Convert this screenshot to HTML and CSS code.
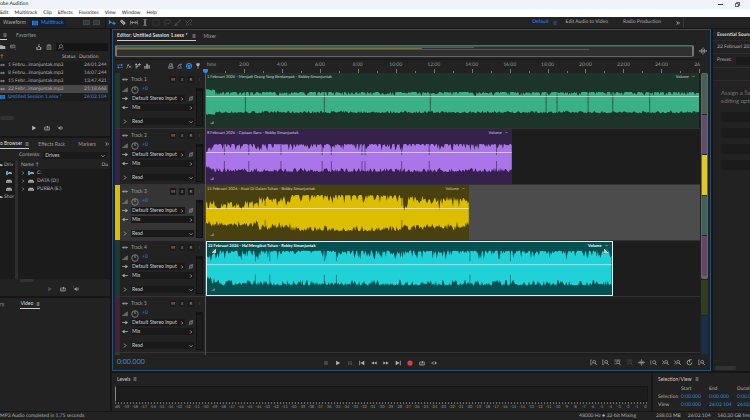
FILE: index.html
```html
<!DOCTYPE html>
<html lang="en">
<head>
    <meta charset="UTF-8">
    <meta name="viewport" content="width=device-width, initial-scale=1.0">
    <title>Adobe Audition</title>
    <link rel="stylesheet" href="styles.css">
</head>
<body>
    <svg class="sprite" aria-hidden="true">
        <symbol id="menu" viewBox="0 0 8 8"><path d="M1 1.5h6M1 4h6M1 6.5h6" fill="none" stroke="currentColor"/></symbol>
        <symbol id="right" viewBox="0 0 8 8"><path d="M2.5 1l3 3-3 3" fill="none" stroke="currentColor" stroke-width="1.3"/></symbol>
        <symbol id="down" viewBox="0 0 8 8"><path d="M1 2.5l3 3 3-3" fill="none" stroke="currentColor" stroke-width="1.3"/></symbol>
        <symbol id="more" viewBox="0 0 8 8"><path d="M1 1l3 3-3 3M4 1l3 3-3 3" fill="none" stroke="currentColor" stroke-width="1.5"/></symbol>
        <symbol id="wave" viewBox="0 0 16 10"><path d="M0 5h16M3 3v4M5 1v8M8 3v4M11 1v8M13 3v4" fill="none" stroke="currentColor" stroke-width="1.4"/></symbol>
        <symbol id="session" viewBox="0 0 16 12"><path d="M0 0h16v12H0z" fill="currentColor"/><path d="M2 3h12M2 6h12M2 9h12" stroke="#14283c" stroke-width="1.4"/></symbol>
        <symbol id="folder" viewBox="0 0 16 12"><path d="M0 1h6l2 2h6v8H0z" fill="currentColor"/></symbol>
        <symbol id="import" viewBox="0 0 16 16"><path d="M1 3h12v7H1zM3 6h6M13 14h2" fill="none" stroke="currentColor" stroke-width="1.5"/></symbol>
        <symbol id="insert" viewBox="0 0 16 16"><path d="M1 8h3v5h7V8h3v7H1zM7 0h2v5h2L8 9 5 5h2z" fill="currentColor"/></symbol>
        <symbol id="trash" viewBox="0 0 16 16"><path d="M3 5h10v10H3zM2 3h12M6 1h4M6 7v6M10 7v6" fill="none" stroke="currentColor" stroke-width="1.4"/></symbol>
        <symbol id="search" viewBox="0 0 16 16"><circle cx="8" cy="6" r="4.5" fill="none" stroke="currentColor" stroke-width="1.6"/><path d="M5 9l-4 5M12 14h3" stroke="currentColor" stroke-width="1.6"/></symbol>
        <symbol id="play" viewBox="0 0 16 16"><path d="M3 2l11 6-11 6z" fill="currentColor"/></symbol>
        <symbol id="stop" viewBox="0 0 16 16"><path d="M3 3h10v10H3z" fill="currentColor"/></symbol>
        <symbol id="pause" viewBox="0 0 16 16"><path d="M3 3h4v10H3zM9 3h4v10H9z" fill="currentColor"/></symbol>
        <symbol id="first" viewBox="0 0 16 16"><path d="M1 2h2v12H1zM14 2v12L4 8z" fill="currentColor"/></symbol>
        <symbol id="last" viewBox="0 0 16 16"><path d="M13 2h2v12h-2zM2 2v12l10-6z" fill="currentColor"/></symbol>
        <symbol id="rewind" viewBox="0 0 20 16"><path d="M10 3v10L1 8zM19 3v10l-9-5z" fill="currentColor"/></symbol>
        <symbol id="forward" viewBox="0 0 20 16"><path d="M1 3v10l9-5zM10 3v10l9-5z" fill="currentColor"/></symbol>
        <symbol id="record" viewBox="0 0 16 16"><circle cx="8" cy="8" r="7" fill="currentColor"/></symbol>
        <symbol id="loop" viewBox="0 0 18 16"><path d="M5 5H2v9h14V5h-3M5 11h8M5 5h6" fill="none" stroke="currentColor" stroke-width="2"/><path d="M9 1l5 4-5 4z" fill="currentColor"/></symbol>
        <symbol id="skip" viewBox="0 0 20 16"><path d="M0 8h6M13 8h3M8 3l-3 5 3 5M11 3v3M11 10v3" fill="none" stroke="currentColor" stroke-width="2"/><path d="M14 3l6 5-6 5z" fill="currentColor"/></symbol>
        <symbol id="speaker" viewBox="0 0 20 16"><path d="M4 6h3l5-5v14l-5-5H4z" fill="currentColor"/><path d="M14 4q3 4 0 8M16 2q5 6 0 12M0 3l3 3M1 1h3" fill="none" stroke="currentColor" stroke-width="1.5"/></symbol>
        <symbol id="drive" viewBox="0 0 18 12"><path d="M4 2h10l4 5v4H0V7z" fill="currentColor"/><path d="M2 8h14" stroke="#444"/></symbol>
        <symbol id="move" viewBox="0 0 20 18"><path d="M2 1l9 9-5 .5L2 15z" fill="currentColor"/><path d="M10 12h4v-6M15 9v6l4-4z" stroke="currentColor" fill="currentColor" stroke-width="1.5"/></symbol>
        <symbol id="razor" viewBox="0 0 18 18"><path d="M1 6l5-5 10 9-5 6z" fill="currentColor"/><path d="M5 6l6 5M15 16h3" stroke="#333" stroke-width="1.5"/></symbol>
        <symbol id="slip" viewBox="0 0 24 16"><path d="M2 2v12M22 2v12M5 8h14M9 4L5 8l4 4M15 4l4 4-4 4" fill="none" stroke="currentColor" stroke-width="2"/></symbol>
        <symbol id="ibeam" viewBox="0 0 16 18"><path d="M4 1q4 0 4 3v10q0 3-4 3M12 1q-4 0-4 3v10q0 3 4 3" fill="none" stroke="currentColor" stroke-width="1.8"/></symbol>
        <symbol id="marquee" viewBox="0 0 16 16"><path d="M1 2h14v12H1z" fill="none" stroke="currentColor" stroke-width="1.5" stroke-dasharray="3 1"/></symbol>
        <symbol id="lasso" viewBox="0 0 18 16"><path d="M3 10q-4-8 6-8t8 5-9 4-4 4" fill="none" stroke="currentColor" stroke-width="1.7"/></symbol>
        <symbol id="brush" viewBox="0 0 16 16"><path d="M15 1L7 9M6 9q-3 0-3 3l-2 3q5 0 6-4" fill="none" stroke="currentColor" stroke-width="2.3"/></symbol>
        <symbol id="heal" viewBox="0 0 18 16"><path d="M2 12L12 1l4 3L6 15zM1 4l4 3M10 11l5 3" fill="none" stroke="currentColor" stroke-width="2"/></symbol>
        <symbol id="swap" viewBox="0 0 18 16"><path d="M0 5h13M5 12h13" stroke="currentColor" stroke-width="2"/><path d="M12 1l6 4-6 4zM6 8l-6 4 6 4z" fill="currentColor"/></symbol>
        <symbol id="fx" viewBox="0 0 18 16"><path d="M1 15q3 0 4-6t5-7M3 6h6M9 7l7 7M16 7l-8 7" fill="none" stroke="currentColor" stroke-width="1.8"/></symbol>
        <symbol id="sends" viewBox="0 0 16 16"><path d="M3 15V3M3 10h5V4h4" fill="none" stroke="currentColor" stroke-width="2"/><path d="M0 5l3-5 3 5zM11 0l5 4-5 4z" fill="currentColor"/></symbol>
        <symbol id="bars" viewBox="0 0 16 16"><path d="M1 8h3v7H1zM6 2h4v13H6zM12 6h3v9h-3z" fill="currentColor"/></symbol>
        <symbol id="metronome" viewBox="0 0 16 16"><path d="M5 2h5l4 12H1zM3 10h9M7 9l5-7" fill="none" stroke="currentColor" stroke-width="1.6"/></symbol>
        <symbol id="global" viewBox="0 0 18 16"><path d="M1 14h14M2 11l5-8 5 8M9 3h6" fill="none" stroke="currentColor" stroke-width="1.8"/></symbol>
        <symbol id="magnet" viewBox="0 0 18 18"><circle cx="9" cy="9" r="9" fill="currentColor"/><path d="M5 15V8q0-4 4-4t4 4v7" fill="none" stroke="#17293b" stroke-width="2.5"/></symbol>
        <symbol id="pin" viewBox="0 0 16 18"><path d="M3 1h10v6l-4 3v7H7v-7L3 7z" fill="currentColor"/></symbol>
        <symbol id="level" viewBox="0 0 18 14"><path d="M0 13L17 1v12z" fill="#555"/><path d="M0 13h17V1M13 3v10M9 6v7" fill="none" stroke="currentColor" stroke-width="1.2"/></symbol>
        <symbol id="knob" viewBox="0 0 22 22"><circle cx="11" cy="11" r="9" fill="none" stroke="currentColor" stroke-width="2"/><path d="M11 3v8" stroke="currentColor" stroke-width="2.4"/></symbol>
        <symbol id="in" viewBox="0 0 16 10"><path d="M0 5h10" stroke="currentColor" stroke-width="2"/><path d="M9 0l7 5-7 5z" fill="currentColor"/></symbol>
        <symbol id="out" viewBox="0 0 16 10"><path d="M6 5h10" stroke="currentColor" stroke-width="2"/><path d="M7 0L0 5l7 5z" fill="currentColor"/></symbol>
        <symbol id="phase" viewBox="0 0 14 14"><circle cx="7" cy="7" r="4.5" fill="none" stroke="currentColor" stroke-width="1.6"/><path d="M1 14L13 0" stroke="currentColor" stroke-width="1.5"/></symbol>
        <symbol id="zoom-box" viewBox="0 0 20 18"><path d="M1 2h4M2 2v13M1 15h4M5 13l4-5" fill="none" stroke="currentColor" stroke-width="1.6"/><circle cx="12" cy="7" r="4" fill="none" stroke="currentColor" stroke-width="1.8"/><path d="M14 10l5 6" stroke="currentColor" stroke-width="2.3"/></symbol>
        <symbol id="zoom-span" viewBox="0 0 20 18"><path d="M1 2h18M3 5v3M3 11v4M6 15l3-5" fill="none" stroke="currentColor" stroke-width="1.6"/><circle cx="12" cy="8" r="4" fill="none" stroke="currentColor" stroke-width="1.8"/><path d="M14 11l5 6" stroke="currentColor" stroke-width="2.3"/></symbol>
        <symbol id="zoom-left" viewBox="0 0 20 18"><path d="M3 2q-3 7 0 14" fill="none" stroke="currentColor" stroke-width="1.6"/><circle cx="12" cy="8" r="4.5" fill="none" stroke="currentColor" stroke-width="1.8"/><path d="M14 11l5 6" stroke="currentColor" stroke-width="2.3"/></symbol>
        <symbol id="zoom-right" viewBox="0 0 20 18"><path d="M1 3l4 5-4 6M6 14l3-4" fill="none" stroke="currentColor" stroke-width="1.8"/><circle cx="12" cy="7" r="4" fill="none" stroke="currentColor" stroke-width="1.8"/><path d="M14 10l5 6" stroke="currentColor" stroke-width="2.3"/></symbol>
        <symbol id="zoom-all" viewBox="0 0 22 22"><path d="M11 1v20M1 11h20M7 5v12M15 5v12M4 8l-3 3 3 3M18 8l3 3-3 3" fill="none" stroke="currentColor" stroke-width="1.7"/></symbol>
        <symbol id="timer" viewBox="0 0 18 18"><path d="M9 3a6 6 0 1 0 6 6M9 9V2h6" fill="none" stroke="currentColor" stroke-width="2"/></symbol>
        <symbol id="min" viewBox="0 0 12 12"><path d="M0 6h12" stroke="currentColor" stroke-width="2"/></symbol>
        <symbol id="restore" viewBox="0 0 12 12"><path d="M1 4h7v7H1zM4 3V1h7v7H9" fill="none" stroke="currentColor" stroke-width="1.8"/></symbol>
    </svg>

    <header class="titlebar">
        <span>obe Audition</span>
        <button class="window-button" aria-label="Minimize"><svg><use href="#min"/></svg></button>
        <button class="window-button" aria-label="Restore"><svg><use href="#restore"/></svg></button>
    </header>
    <nav class="menubar">
        <a href="#">Edit</a><a href="#">Multitrack</a><a href="#">Clip</a><a href="#">Effects</a><a href="#">Favorites</a><a href="#">View</a><a href="#">Window</a><a href="#">Help</a>
    </nav>
    <div class="toolbar">
        <div class="modes">
            <button>Waveform</button>
            <button class="mode-active"><svg><use href="#session"/></svg>Multitrack</button>
        </div>
        <div class="views dim">
            <button aria-label="Spectral frequency"><svg><use href="#session"/></svg></button>
            <button aria-label="Spectral pitch"><svg><use href="#session"/></svg></button>
        </div>
        <div class="tools">
            <button class="blue" aria-label="Move"><svg><use href="#move"/></svg></button>
            <button aria-label="Razor"><svg><use href="#razor"/></svg></button>
            <button aria-label="Slip"><svg><use href="#slip"/></svg></button>
            <button aria-label="Time selection"><svg><use href="#ibeam"/></svg></button>
            <button class="dim" aria-label="Marquee"><svg><use href="#marquee"/></svg></button>
            <button class="dim" aria-label="Lasso"><svg><use href="#lasso"/></svg></button>
            <button class="dim" aria-label="Brush"><svg><use href="#brush"/></svg></button>
            <button class="dim" aria-label="Healing brush"><svg><use href="#heal"/></svg></button>
        </div>
        <div class="workspaces">
            <a href="#" class="blue">Default <svg><use href="#menu"/></svg></a>
            <a href="#">Edit Audio to Video</a>
            <a href="#">Radio Production</a>
            <button aria-label="More workspaces"><svg><use href="#more"/></svg></button>
        </div>
    </div>

    <main class="workspace">
        <aside class="sidebar">
            <section class="panel files">
                <div class="tabs">
                    <button class="tab tab-clip tab-active" aria-label="Files"><svg><use href="#menu"/></svg></button>
                    <button class="tab">Favorites</button>
                </div>
                <div class="file-tools">
                    <button aria-label="Open"><svg><use href="#folder"/></svg></button>
                    <button aria-label="Import"><svg><use href="#import"/></svg></button>
                    <button class="push" aria-label="Insert"><svg><use href="#insert"/></svg></button>
                    <button aria-label="Delete"><svg><use href="#trash"/></svg></button>
                    <label class="search"><svg><use href="#search"/></svg><input type="text" aria-label="Search files"></label>
                </div>
                <table class="file-table">
                    <thead><tr><th>↑</th><th></th><th>Status</th><th>Duration</th></tr></thead>
                    <tbody>
                        <tr><td><svg><use href="#wave"/></svg></td><td colspan="2">1 Febru...imanjuntak.mp3</td><td>26:01.244</td></tr>
                        <tr><td><svg><use href="#wave"/></svg></td><td colspan="2">8 Febru...imanjuntak.mp3</td><td>16:07.244</td></tr>
                        <tr><td><svg><use href="#wave"/></svg></td><td colspan="2">15 Febr...imanjuntak.mp3</td><td>13:47.421</td></tr>
                        <tr class="selected"><td><svg><use href="#wave"/></svg></td><td colspan="2">22 Febr...imanjuntak.mp3</td><td>21:18.668</td></tr>
                        <tr class="blue"><td><svg><use href="#session"/></svg></td><td colspan="2">Untitled Session 1.sesx *</td><td>26:02.104</td></tr>
                    </tbody>
                </table>
                <div class="scroll-x"></div>
                <div class="preview">
                    <button aria-label="Play"><svg><use href="#play"/></svg></button>
                    <button aria-label="Loop"><svg><use href="#loop"/></svg></button>
                    <button aria-label="Auto-play"><svg><use href="#speaker"/></svg></button>
                </div>
            </section>

            <section class="panel browser">
                <div class="tabs">
                    <button class="tab tab-clip tab-active">o Browser <svg><use href="#menu"/></svg></button>
                    <button class="tab">Effects Rack</button>
                    <button class="tab">Markers</button>
                    <button class="tab tab-more" aria-label="More panels"><svg><use href="#more"/></svg></button>
                </div>
                <label class="contents">Contents:
                    <span class="field"><select><option>Drives</option></select><svg><use href="#down"/></svg></span>
                </label>
                <div class="browser-body">
                    <ul class="places">
                        <li><svg class="cut"><use href="#folder"/></svg>Driv</li>
                        <li class="place"><svg class="c-drive"><use href="#drive"/></svg></li>
                        <li class="place"><svg><use href="#drive"/></svg></li>
                        <li class="place"><svg><use href="#drive"/></svg></li>
                        <li><svg class="cut"><use href="#folder"/></svg>Shor</li>
                    </ul>
                    <div class="splitter"></div>
                    <ul class="drives">
                        <li class="drives-head"><span>Name ↑</span><span>Du</span></li>
                        <li><svg class="arrow"><use href="#right"/></svg><svg class="c-drive"><use href="#drive"/></svg>C:</li>
                        <li><svg class="arrow"><use href="#right"/></svg><svg><use href="#drive"/></svg>DATA (D:)</li>
                        <li><svg class="arrow"><use href="#right"/></svg><svg><use href="#drive"/></svg>PURBA (E:)</li>
                    </ul>
                </div>
                <div class="scroll-x scroll-inner"></div>
                <div class="preview preview-browser">
                    <button class="dim" aria-label="Play"><svg><use href="#play"/></svg></button>
                    <button aria-label="Loop"><svg><use href="#loop"/></svg></button>
                    <button aria-label="Auto-play"><svg><use href="#speaker"/></svg></button>
                </div>
            </section>

            <section class="panel video">
                <div class="tabs">
                    <button class="tab tab-clip">ry</button>
                    <button class="tab tab-active">Video <svg><use href="#menu"/></svg></button>
                </div>
            </section>
        </aside>

        <section class="panel editor">
            <div class="tabs">
                <button class="tab tab-active">Editor: Untitled Session 1.sesx * <svg><use href="#menu"/></svg></button>
                <button class="tab">Mixer</button>
            </div>
            <div class="overview-row">
                <div class="overview"><div class="overview-lines"><i></i><i></i><i></i><i></i></div></div>
                <button aria-label="Zoom out full"><svg><use href="#zoom-all"/></svg></button>
            </div>
            <div class="ruler-row">
                <div class="track-tools">
                    <button class="blue" aria-label="Inputs and outputs"><svg><use href="#swap"/></svg></button>
                    <button aria-label="Effects"><svg><use href="#fx"/></svg></button>
                    <button aria-label="Sends"><svg><use href="#sends"/></svg></button>
                    <button aria-label="EQ"><svg><use href="#bars"/></svg></button>
                    <button class="push" aria-label="Metronome"><svg><use href="#metronome"/></svg></button>
                    <button aria-label="Global clip stretching"><svg><use href="#global"/></svg></button>
                    <button class="blue" aria-label="Snap"><svg><use href="#magnet"/></svg></button>
                    <button aria-label="Marker"><svg><use href="#pin"/></svg></button>
                </div>
                <div class="ruler" id="ruler"></div>
            </div>
            <div class="tracks-area">
                <div class="tracks" id="tracks"></div>
                <div class="minimap">
                    <div class="minimap-view"><i class="m-green"></i><i class="m-purple"></i><i class="m-yellow"></i><i class="m-teal"></i><i class="m-plum"></i></div>
                    <i class="m-olive"></i><i class="m-blue"></i>
                </div>
            </div>
            <div class="transport">
                <output class="timecode">0:00.000</output>
                <div class="transport-buttons">
                    <button class="dim" aria-label="Stop"><svg><use href="#stop"/></svg></button>
                    <button aria-label="Play"><svg><use href="#play"/></svg></button>
                    <button class="dim" aria-label="Pause"><svg><use href="#pause"/></svg></button>
                    <button aria-label="Go to start"><svg><use href="#first"/></svg></button>
                    <button aria-label="Rewind"><svg><use href="#rewind"/></svg></button>
                    <button aria-label="Fast forward"><svg><use href="#forward"/></svg></button>
                    <button aria-label="Go to end"><svg><use href="#last"/></svg></button>
                    <button class="red" aria-label="Record"><svg><use href="#record"/></svg></button>
                    <button aria-label="Loop"><svg><use href="#loop"/></svg></button>
                    <button aria-label="Skip selection"><svg><use href="#skip"/></svg></button>
                </div>
                <div class="zoom-buttons">
                    <button aria-label="Zoom in amplitude"><svg><use href="#zoom-box"/></svg></button>
                    <button aria-label="Zoom out amplitude"><svg><use href="#zoom-box"/></svg></button>
                    <button aria-label="Zoom in time"><svg><use href="#zoom-span"/></svg></button>
                    <button class="dim" aria-label="Zoom out time"><svg><use href="#zoom-span"/></svg></button>
                    <button aria-label="Zoom out full"><svg><use href="#zoom-all"/></svg></button>
                    <button aria-label="Zoom at in point"><svg><use href="#zoom-left"/></svg></button>
                    <button aria-label="Zoom at out point"><svg><use href="#zoom-right"/></svg></button>
                    <button aria-label="Zoom to selection"><svg><use href="#zoom-right"/></svg></button>
                    <button aria-label="Timed zoom"><svg><use href="#timer"/></svg></button>
                    <button aria-label="Zoom selected track"><svg><use href="#zoom-box"/></svg></button>
                </div>
            </div>
        </section>

        <aside class="panel sound">
            <h2>Essential Sound</h2>
            <p class="sound-clip">22 Februari 202</p>
            <label class="preset">Preset: <select><option></option></select></label>
            <div class="sound-row"></div>
            <p class="hint">Assign a Ta<br>editing opti</p>
            <div class="types">
                <button aria-label="Dialogue"></button>
                <button aria-label="Music"></button>
                <button aria-label="SFX"></button>
                <button aria-label="Ambience"></button>
            </div>
            <div class="scroll-x"></div>
        </aside>

        <section class="panel levels">
            <div class="tabs"><button class="tab">Levels <svg><use href="#menu"/></svg></button></div>
            <div class="meter"></div>
            <div class="ticks"></div>
            <div class="scale" id="scale"></div>
        </section>

        <section class="panel selection">
            <div class="tabs"><button class="tab">Selection/View <svg><use href="#menu"/></svg></button></div>
            <table>
                <tr><td></td><th>Start</th><th>End</th><th>Duratio</th></tr>
                <tr><th>Selection</th><td>0:00.000</td><td>0:00.000</td><td>0:00.0</td></tr>
                <tr><th>View</th><td>0:00.000</td><td>26:02.104</td><td>26:02.</td></tr>
            </table>
        </section>
    </main>

    <footer class="status">
        <span>MP3 Audio completed in 1,75 seconds</span>
        <span class="push">48000 Hz ● 32-bit Mixing</span>
        <div class="status-side"><span>288,03 MB</span><span>26:02.104</span><span>560,30 GB free</span></div>
    </footer>

    <script src="script.js"></script>
</body>
</html>
```
FILE: styles.css
```css
* {
    box-sizing: border-box;
}
body {
    margin: 0;
    height: 100vh;
    display: flex;
    flex-direction: column;
    overflow: hidden;
    background-color: #161616;
    color: #b0b0b0;
    font-family: Lato, "Liberation Sans", sans-serif;
    font-size: 5px;
    line-height: 7px;
    white-space: nowrap;
    text-rendering: geometricPrecision;
}
button, input, select {
    font: inherit;
    color: inherit;
    background: none;
    border: none;
    margin: 0;
    padding: 0;
    min-width: 0;
}
button {
    display: flex;
    align-items: center;
    gap: 3px;
    cursor: pointer;
}
select {
    appearance: none;
    flex: 1;
}
a {
    color: inherit;
    text-decoration: none;
}
svg {
    display: block;
    width: 6px;
    height: 6px;
    flex: none;
}
ul, p, h2 {
    margin: 0;
    padding: 0;
    list-style: none;
    font-size: inherit;
}
table {
    border-collapse: collapse;
}
th, td {
    padding: 0;
    text-align: left;
    font-weight: normal;
}
.sprite {
    display: none;
}
.blue {
    color: #2d8ceb;
}
.red {
    color: #e23c3c;
}
.dim {
    color: #4a4a4a;
}
.push {
    margin-left: auto;
}

/* window */
.titlebar {
    display: flex;
    align-items: center;
    height: 9px;
    gap: 12px;
    padding-right: 10px;
    background-color: #eef4f9;
    color: #222;
}
.titlebar span {
    flex: 1;
}
.window-button svg {
    width: 5px;
    height: 5px;
}
.menubar {
    display: flex;
    align-items: center;
    gap: 6px;
    height: 8px;
    background-color: #fff;
    color: #222;
}
.toolbar {
    display: flex;
    align-items: center;
    height: 12px;
    background-color: #232323;
    border-bottom: 1px solid #161616;
}
.toolbar > div {
    display: flex;
    align-items: center;
    height: 100%;
}
.modes {
    gap: 4px;
    padding-left: 3px;
}
.mode-active {
    height: 9px;
    padding: 0 2px;
    background-color: #12202f;
    color: #2d8ceb;
}
.views {
    gap: 3px;
    padding: 0 5px 0 17px;
    border-right: 1px solid #161616;
}
.views svg {
    width: 7px;
    height: 5px;
}
.tools {
    gap: 4px;
    padding-left: 3px;
}
.tools button {
    width: 7px;
    justify-content: center;
}
.tools svg {
    width: 8px;
    height: 7px;
}
.workspaces {
    gap: 15px;
    margin-left: auto;
    margin-right: 66px;
    padding-right: 3px;
    border-right: 1px solid #3a3a3a;
}
.workspaces a {
    display: flex;
    align-items: center;
    gap: 4px;
}
.workspaces svg {
    width: 4px;
    height: 4px;
}
.workspaces a.blue {
    margin-right: -6px;
}

/* panels */
.workspace {
    flex: 1;
    min-height: 0;
    display: grid;
    grid-template-columns: 110px 1fr 58px 37px;
    grid-template-rows: 1fr 38px;
    gap: 2px;
}
.panel {
    background-color: #222;
    min-width: 0;
    overflow: hidden;
}
.sidebar {
    grid-row: 1 / 3;
    display: grid;
    grid-template-rows: 107px 158px 1fr;
    gap: 2px;
}
.files, .browser, .editor, .sound {
    display: flex;
    flex-direction: column;
}
.tabs {
    display: flex;
    gap: 8px;
    height: 12px;
    padding: 1px 4px 0;
    flex: none;
}
.tab {
    height: 10px;
    color: #999;
}
.tab svg {
    width: 4px;
    height: 4px;
}
.tab-active {
    color: #ddd;
    border-bottom: 1px solid #ccc;
}
.tab-clip {
    margin-left: -4px;
}

/* files */
.files .tab-clip {
    width: 7px;
    justify-content: flex-end;
}
.file-tools {
    display: flex;
    align-items: center;
    gap: 4px;
    height: 12px;
    padding-right: 2px;
}
.search {
    display: flex;
    align-items: center;
    width: 52px;
    height: 8px;
    padding: 0 2px;
    background-color: #151515;
}
.search input {
    flex: 1;
}
.file-table {
    width: 108px;
    background-color: #1c1c1c;
    table-layout: fixed;
}
.files .tabs {
    gap: 9px;
}
.file-table th {
    height: 8px;
    line-height: 8px;
    background-color: #222;
}
.file-table th:first-child {
    width: 8px;
}
.file-table th:nth-child(3) {
    width: 17px;
}
.file-table th:nth-child(4) {
    width: 29px;
}
.file-table td {
    height: 8px;
    line-height: 7px;
}
.file-table td:last-child {
    padding-left: 5px;
}
.file-table svg {
    width: 5px;
    height: 4px;
}
.selected {
    background-color: #484848;
}
.files .scroll-x {
    margin-top: auto;
}
.scroll-x {
    width: 14px;
    height: 4px;
    border-radius: 2px;
    background-color: #333;
    flex: none;
}
.preview {
    display: flex;
    align-items: center;
    justify-content: center;
    gap: 7px;
    height: 16px;
    padding-right: 16px;
    background-color: #222;
    flex: none;
}

/* browser */
.browser .tab-more {
    margin-left: auto;
}
.browser .tab-clip {
    margin-right: 2px;
}
.browser .tabs {
    gap: 7px;
    padding-right: 1px;
}
.browser .tab:nth-child(3) {
    margin-left: 6px;
}
.contents {
    display: flex;
    align-items: center;
    gap: 3px;
    height: 11px;
    padding: 0 3px 0 19px;
}
.field {
    display: flex;
    align-items: center;
    flex: 1;
    height: 7px;
    padding: 0 2px;
    background-color: #1a1a1a;
    color: #ccc;
}
.field svg {
    width: 4px;
    height: 4px;
}
.browser-body {
    display: flex;
    flex: 1;
}
.places {
    width: 15px;
    background-color: #1b1b1b;
}
.places li, .drives li {
    display: flex;
    align-items: center;
    gap: 3px;
    height: 8px;
}
.places svg, .drives svg {
    width: 6px;
    height: 4px;
}
.places li {
    gap: 1px;
}
.places .cut {
    width: 3px;
}
.places .place {
    padding-left: 6px;
}
.c-drive {
    border-left: 2px solid #35a8d8;
}
.splitter {
    width: 3px;
    background-color: #2e2e2e;
}
.drives {
    flex: 1;
    background-color: #1b1b1b;
    padding-left: 3px;
}
.drives .arrow {
    width: 4px;
}
.drives .drives-head {
    justify-content: space-between;
    margin-left: -3px;
    padding: 0 2px 0 3px;
    background-color: #222;
}
.scroll-inner {
    height: 3px;
    margin-left: 20px;
}
.preview-browser {
    padding: 0 0 0 16px;
    height: 14px;
}
.video .tabs {
    gap: 16px;
}

/* editor */
.editor {
    grid-column: 2 / 4;
    border: 1px solid #245174;
    padding: 0 2px;
}
.editor .tabs {
    padding: 1px 2px 0;
}
.editor .tab svg {
    margin-left: 1px;
}
.editor .tab-active {
    font-weight: bold;
}
.overview-row {
    display: flex;
    align-items: center;
    gap: 5px;
    height: 16px;
    margin-top: 1px;
    padding-right: 1px;
}
.overview {
    flex: 1;
    height: 12px;
    border: 1px solid #666;
    border-left: 2px solid #777;
    border-right: 2px solid #777;
    border-radius: 2px;
    background-color: #303030;
}
.overview-row svg {
    width: 8px;
    height: 8px;
}
.overview-lines i {
    display: block;
    height: 1px;
    background-color: #3c574c;
}
.overview-lines i:nth-child(2) {
    width: 62%;
    background-color: #62516f;
}
.overview-lines i:nth-child(3) {
    width: 53%;
    background-color: #75724a;
}
.overview-lines i:nth-child(4) {
    width: 82%;
    background-color: #2f6370;
}
.ruler-row {
    display: flex;
    height: 14px;
    margin-right: 8px;
    padding-top: 1px;
    border-top: 1px solid #171717;
    flex: none;
}
.track-tools {
    display: flex;
    align-items: center;
    gap: 3px;
    width: 91px;
    padding: 0 5px 2px 2px;
}
.ruler {
    position: relative;
    flex: 1;
    color: #999;
}
.ruler span, .ruler i {
    position: absolute;
}
.ruler span {
    top: 1px;
    transform: translateX(-50%);
}
.ruler .unit {
    left: 1px;
    transform: none;
}
.ruler .end {
    right: 0;
    transform: none;
}
.ruler i {
    bottom: 0;
    width: 1px;
    height: 2px;
    background-color: #777;
}
.ruler .major {
    height: 4px;
}
.ruler .head {
    left: -3px;
    width: 5px;
    height: 4px;
    border-radius: 1px 1px 3px 3px;
    background-color: #2d8ceb;
}
.tracks-area {
    display: flex;
    flex: 1;
    min-height: 0;
}
.tracks {
    position: relative;
    flex: 1;
    min-width: 0;
    overflow: hidden;
}
.playhead {
    position: absolute;
    top: 0;
    bottom: 0;
    left: 90px;
    width: 1px;
    background-color: #9c3434;
}
.track {
    display: flex;
    height: 56px;
    border-bottom: 1px solid #333;
    background-color: #1d1d1d;
}
.track-active {
    background-color: #4c4c4c;
}
.strip {
    width: 5px;
    background-color: var(--strip);
}
.track-head {
    display: flex;
    gap: 2px;
    width: 86px;
    padding: 1px 3px 0 2px;
    background-color: #222;
}
.track-active .track-head {
    background-color: #353535;
}
.controls {
    flex: 1;
}
.row {
    display: flex;
    align-items: center;
    gap: 3px;
    height: 9px;
}
.row > svg {
    width: 6px;
    height: 5px;
}
.row .knob {
    width: 8px;
    height: 8px;
}
.row-name {
    height: 11px;
}
.row-name input {
    flex: 1;
    width: 20px;
    color: #999;
}
.row-name button {
    width: 6px;
    height: 7px;
    justify-content: center;
    background-color: #1a1a1a;
    color: #aaa;
    font-size: 4px;
}
.row .field {
    padding: 0 1px;
    background-color: #191919;
}
.row-read {
    margin-top: 5px;
}
.row-level {
    color: #2d8ceb;
}
.row-level svg {
    color: #999;
}
.vu {
    display: flex;
    flex-direction: column;
    width: 7px;
    gap: 5px;
    padding-top: 2px;
}
.vu button {
    height: 7px;
    justify-content: center;
    color: #555;
    font-size: 4px;
}
.vu i {
    height: 38px;
    border: 1px solid #111;
    border-top: 3px solid #131313;
    background-color: #1c1c1c;
}
.lane {
    flex: 1;
    min-width: 0;
}
.clip {
    position: relative;
    height: 55px;
    background-color: var(--back);
    overflow: hidden;
}
.clip-selected {
    border: 1px solid #d5f4f4;
}
.clip-wave {
    position: absolute;
    inset: 0;
    width: 100%;
    height: 100%;
    color: var(--wave);
}
.clip-head {
    position: relative;
    display: flex;
    justify-content: space-between;
    padding: 0 4px 0 1px;
    color: #ccc;
    font-size: 4px;
    line-height: 7px;
}
.clip-selected .clip-head {
    color: #fff;
    font-weight: bold;
}
.clip-head span:last-child {
    display: flex;
    align-items: center;
    gap: 3px;
}
.clip-head svg {
    width: 3px;
    height: 3px;
}
.gain {
    position: absolute;
    left: 4px;
    bottom: 4px;
    width: 4px;
    height: 3px;
    color: #ddd;
}
.fade {
    position: absolute;
    top: 7px;
    width: 4px;
    height: 4px;
    background: linear-gradient(45deg, #c4cccc 50%, #4a5a5a 50%);
}
.fade-in {
    left: 5px;
    transform: scaleX(-1);
}
.fade-out {
    right: 4px;
}
.minimap {
    display: flex;
    flex-direction: column;
    gap: 1px;
    width: 8px;
    padding: 0 0 1px 1px;
}
.minimap-view {
    display: flex;
    flex-direction: column;
    flex: 206;
    gap: 1px;
    border: 1px solid #666;
    border-bottom-width: 3px;
    border-radius: 2px;
    background-color: #222;
}
.minimap-view i {
    flex: 1;
}
.m-green { background-color: #475f56; }
.m-purple { background-color: #5e4f6c; }
.m-yellow { background-color: #e0c92f; }
.m-teal { background-color: #40605a; }
.m-plum { background-color: #634661; }
.m-olive { flex: 36; background-color: #303d1e; }
.m-blue { flex: 39; background-color: #16304a; }

/* transport */
.transport {
    display: grid;
    grid-template-columns: 35% auto 1fr;
    align-items: center;
    height: 15px;
    padding: 0 3px 0 2px;
    flex: none;
}
.timecode {
    color: #2d8ceb;
    font-size: 7px;
}
.transport-buttons, .zoom-buttons {
    display: flex;
    gap: 6px;
}
.transport-buttons svg {
    width: 6px;
    height: 6px;
}
.zoom-buttons {
    justify-content: flex-end;
    gap: 5px;
}
.zoom-buttons svg {
    width: 7px;
    height: 7px;
}

/* essential sound */
.sound h2 {
    height: 12px;
    padding: 3px 4px 0;
    color: #ddd;
    font-weight: bold;
    border-bottom: 1px solid #2c2c2c;
}
.sound-clip {
    height: 13px;
    padding: 3px 0 0;
    border-bottom: 1px solid #2c2c2c;
}
.sound .sound-clip {
    padding-left: 4px;
}
.preset {
    display: flex;
    align-items: center;
    gap: 4px;
    height: 14px;
    padding-left: 4px;
    border-bottom: 1px solid #2c2c2c;
}
.preset select {
    height: 8px;
    background-color: #1a1a1a;
}
.sound-row {
    height: 13px;
    border-bottom: 1px solid #2c2c2c;
}
.hint {
    padding: 9px 0 6px 8px;
    color: #777;
    font-size: 6px;
    line-height: 8px;
}
.types {
    display: grid;
    gap: 6px;
    padding-left: 8px;
}
.types button {
    height: 10px;
    border-radius: 2px 0 0 2px;
    background-color: #1b1b1b;
}
.sound .scroll-x {
    width: 21px;
    margin: auto 0 1px 2px;
}

/* levels */
.levels {
    grid-column: 2 / 3;
    padding: 0 3px;
}
.levels .tabs, .selection .tabs {
    padding: 1px 2px 0;
}
.levels .tab, .selection .tab {
    color: #ccc;
}
.meter {
    height: 16px;
    margin-top: 1px;
    border: 1px solid #151515;
    border-left: 1px solid #8a9420;
    background-color: #1c1c1c;
}
.ticks {
    height: 2px;
    background: repeating-linear-gradient(90deg, #666 0 1px, transparent 1px 3px);
}
.scale {
    display: flex;
    justify-content: space-between;
    color: #999;
    font-size: 4px;
    line-height: 6px;
}
.scale span {
    display: flex;
    justify-content: center;
    width: 5px;
}
.selection {
    grid-column: 3 / 5;
    padding: 0 0 0 3px;
}
.selection table {
    table-layout: fixed;
    width: 100%;
}
.selection th, .selection td {
    height: 8px;
    padding: 0 0 0 2px;
}
.selection td {
    color: #2d8ceb;
}
.selection tr > :first-child {
    width: 23px;
}
.selection tr > :nth-child(2), .selection tr > :nth-child(3) {
    width: 28px;
}
.status {
    display: flex;
    align-items: center;
    height: 9px;
    background-color: #222;
    border-top: 1px solid #161616;
}
.status-side {
    display: flex;
    gap: 7px;
    width: 114px;
    padding-left: 20px;
}
```
FILE: script.js
```js
var tracks = [
    { name: 'Track 1', strip: '#1d3a2e', back: '#1d342b', wave: '#39b086', title: '1 Februari 2026 - Menjadi Orang Yang Berdampak - Robby Simanjuntak', length: 99.8, top: 19, bottom: 40, rough: 4, gaps: [8, 24, 45.5, 69, 71.2, 77.5, 82.5, 90] },
    { name: 'Track 2', strip: '#35214a', back: '#35214b', wave: '#aa75e8', title: '8 Februari 2026 - Ciptaan Baru - Robby Simanjuntak', length: 61.9, top: 15, bottom: 43, rough: 7, gaps: [6, 14, 24.5, 38, 41, 51, 52, 64, 73, 95] },
    { name: 'Track 3', strip: '#dcbd00', back: '#494010', wave: '#dcbd00', title: '15 Februari 2026 - Kuat Di Dalam Tuhan - Robby Simanjuntak', length: 53.2, top: 10, bottom: 46, rough: 9, gaps: [22.5, 74.5], active: true },
    { name: 'Track 4', strip: '#183a38', back: '#075052', wave: '#20d1d7', title: '22 Februari 2026 - Hal Mengikut Tuhan - Robby Simanjuntak', length: 82.3, top: 9, bottom: 45, rough: 10, gaps: [12, 15.5, 29, 32, 65, 75], selected: true },
    { name: 'Track 5', strip: '#47203f' },
    { name: 'Track 6', strip: '#303d1e' }
];

var seed = 7;
function random() {
    seed = (seed * 16807) % 2147483647;
    return seed / 2147483647;
}

// how quiet the recording is at position p (0..1)
function quiet(track, p) {
    if (track.name === 'Track 3') {
        if (p < 0.2) return random() * 4 + 5;
        if (p < 0.32) return random() * 5 + 1;
        if (p > 0.74) return random() * 8;
        return 0;
    }
    if (track.name === 'Track 1') {
        return p < 0.02 ? -3 : 0;
    }
    return p < 0.03 ? 6 - p * 200 : 0;
}

function wavePath(track) {
    var width = Math.round(track.length * 5);
    var up = '';
    var down = '';
    for (var x = 0; x <= width; x++) {
        var q = quiet(track, x / width);
        var spikeTop = Math.pow(random(), 4) * track.rough;
        var spikeBottom = Math.pow(random(), 2) * track.rough * 0.6;
        up += 'L' + x + ' ' + (track.top + q + spikeTop).toFixed(1);
        down = 'L' + x + ' ' + (track.bottom - q * 0.7 - spikeBottom).toFixed(1) + down;
    }
    var gaps = track.gaps.map(function (g) {
        var x = (g / 100 * width).toFixed(1);
        return '<path d="M' + x + ' ' + track.top + 'V' + (track.top + 11) + 'M' + x + ' ' + (track.bottom - 11) + 'V' + track.bottom + '" stroke="' + track.back + '" stroke-width="0.6"/>';
    }).join('');
    return '<svg class="clip-wave" viewBox="0 0 ' + width + ' 55" preserveAspectRatio="none">' +
        '<path fill="currentColor" d="M0 ' + track.top + up + down + 'z"/>' + gaps +
        '<path d="M0 23.5H' + width + '" stroke="#fff" stroke-opacity="0.55"/></svg>';
}

function icon(name, cls) {
    return '<svg class="' + (cls || '') + '"><use href="#' + name + '"/></svg>';
}

function clip(track) {
    if (!track.title) return '';
    var fades = track.selected ? '<i class="fade fade-in"></i><i class="fade fade-out"></i>' : '';
    return '<div class="clip' + (track.selected ? ' clip-selected' : '') + '" style="width: ' + track.length + '%; --back: ' + track.back + '; --wave: ' + track.wave + '">' +
        wavePath(track) +
        '<div class="clip-head"><span>' + track.title + '</span><span>Volume ' + icon('down') + '</span></div>' +
        fades + icon('level', 'gain') + '</div>';
}

function select(track, label, value, arrow) {
    return '<label class="field"><select aria-label="' + track.name + ' ' + label + '"><option>' + value + '</option></select>' + icon(arrow) + '</label>';
}

function head(t) {
    return '<div class="track-head"><div class="controls">' +
        '<div class="row row-name">' + icon('wave') + '<input type="text" aria-label="Track name" value="' + t.name + '"><button>M</button><button>S</button><button>R</button></div>' +
        '<div class="row row-level">' + icon('level') + icon('knob', 'knob') + '+0</div>' +
        '<div class="row">' + icon('in') + select(t, 'input', 'Default Stereo Input', 'right') + icon('phase') + '</div>' +
        '<div class="row">' + icon('out') + select(t, 'output', 'Mix', 'right') + '</div>' +
        '<div class="row row-read">' + icon('right') + select(t, 'automation', 'Read', 'down') + '</div>' +
        '</div><div class="vu"><button>I</button><i></i></div></div>';
}

// the last track only peeks in at the bottom, so it gets no controls
document.getElementById('tracks').innerHTML = tracks.map(function (t, i) {
    return '<div class="track' + (t.active ? ' track-active' : '') + '">' +
        '<div class="strip" style="--strip: ' + t.strip + '"></div>' +
        (i < 5 ? head(t) : '<div class="track-head"></div>') +
        '<div class="lane">' + clip(t) + '</div></div>';
}).join('') + '<div class="playhead"></div>';

// ruler: one tick per minute, a label every two
var ruler = '<span class="unit">hms</span><i class="head"></i>';
for (var m = 1; m <= 26; m++) {
    var left = (m / 26.035 * 100).toFixed(2);
    ruler += '<i class="' + (m % 2 ? '' : 'major') + '" style="left: ' + left + '%"></i>';
    if (m % 2 === 0 && m < 26) {
        ruler += '<span style="left: ' + left + '%">' + m + ':00</span>';
    }
}
ruler += '<span class="end">26</span>';
document.getElementById('ruler').innerHTML = ruler;

var scale = '<span>dB</span>';
for (var db = -59; db <= 0; db++) {
    scale += '<span>' + db + '</span>';
}
document.getElementById('scale').innerHTML = scale;
```
